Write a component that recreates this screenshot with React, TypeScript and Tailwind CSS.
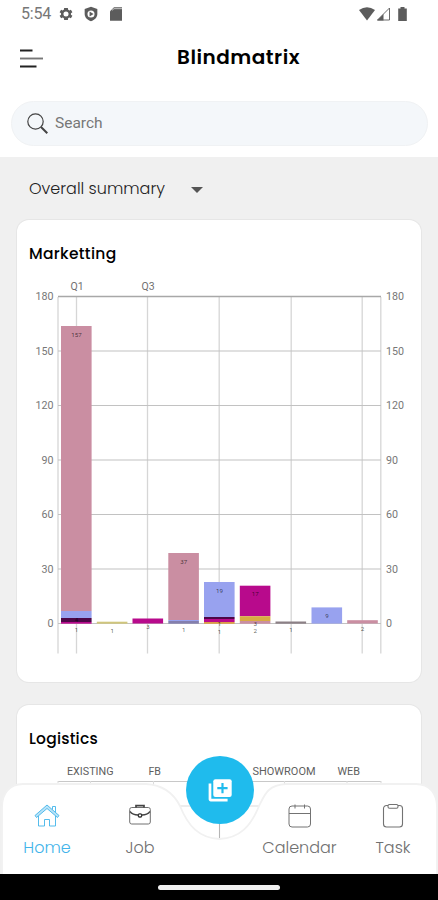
import React from "react";

type Segment = { y: number; h: number; fill: string };
type Label = { y: number; text: string };
type Bar = { x: number; segments: Segment[]; labels: Label[] };

const PINK = "#ca8ea2";
const BLUE = "#98a2ef";
const MAGENTA = "#b80a8c";
const DARK = "#4d0747";

const bars: Bar[] = [
  {
    x: 61,
    segments: [
      { y: 326, h: 285, fill: PINK },
      { y: 611, h: 7, fill: BLUE },
      { y: 618, h: 4, fill: DARK },
      { y: 622, h: 1.7, fill: MAGENTA },
    ],
    labels: [{ y: 337, text: "157" }, { y: 622, text: "4" }, { y: 632, text: "1" }],
  },
  { x: 96.8, segments: [{ y: 621.7, h: 2, fill: "#d0c67c" }], labels: [{ y: 633, text: "1" }] },
  { x: 132.5, segments: [{ y: 618.5, h: 5, fill: MAGENTA }], labels: [{ y: 629, text: "3" }] },
  {
    x: 168.3,
    segments: [
      { y: 553, h: 67, fill: PINK },
      { y: 620, h: 1, fill: BLUE },
      { y: 621, h: 2.7, fill: "#847fae" },
    ],
    labels: [{ y: 563.5, text: "37" }, { y: 632, text: "1" }],
  },
  {
    x: 204,
    segments: [
      { y: 582, h: 35, fill: BLUE },
      { y: 617, h: 2, fill: DARK },
      { y: 619, h: 3, fill: MAGENTA },
      { y: 622, h: 1.8, fill: "#dc9e45" },
    ],
    labels: [{ y: 593, text: "19" }, { y: 626, text: "1" }, { y: 633.5, text: "1" }],
  },
  {
    x: 239.8,
    segments: [
      { y: 585.7, h: 30.5, fill: MAGENTA },
      { y: 616.2, h: 4.8, fill: "#d8aa43" },
      { y: 621, h: 2.7, fill: PINK },
    ],
    labels: [{ y: 596, text: "17" }, { y: 625.5, text: "3" }, { y: 633, text: "2" }],
  },
  { x: 275.5, segments: [{ y: 621.5, h: 2.2, fill: "#8c8086" }], labels: [{ y: 632, text: "1" }] },
  { x: 311.5, segments: [{ y: 607.4, h: 16.2, fill: BLUE }], labels: [{ y: 618, text: "9" }] },
  { x: 347.2, segments: [{ y: 620.2, h: 3.3, fill: PINK }], labels: [{ y: 631, text: "2" }] },
];

const ticks = [180, 150, 120, 90, 60, 30, 0];
const tickY = (v: number) => 623.5 - (v / 180) * 327;

function MarketingChart() {
  return (
    <svg
      viewBox="17 274 404 392"
      className="block h-[392px] w-[404px] font-['Roboto','Liberation_Sans',sans-serif]"
    >
      {[58, 76.5, 147.5, 219.2, 291.2, 362.2, 380.8].map((x) => (
        <line key={x} x1={x} x2={x} y1={297} y2={653.5} stroke="#d6d6d6" strokeWidth={1.3} />
      ))}
      {ticks.map((v) => (
        <g key={v}>
          <line
            x1={58}
            x2={381}
            y1={tickY(v)}
            y2={tickY(v)}
            stroke={v === 180 ? "#a8a8a8" : "#c2c2c2"}
            strokeWidth={v === 180 ? 1.4 : 1.1}
          />
          <text x={53.5} y={tickY(v) + 3.6} textAnchor="end" fontSize={10.7} fill="#777">
            {v}
          </text>
          <text x={386} y={tickY(v) + 3.6} fontSize={10.7} fill="#777">
            {v}
          </text>
        </g>
      ))}
      <text x={77} y={289.5} textAnchor="middle" fontSize={10.5} fill="#707070">Q1</text>
      <text x={148} y={289.5} textAnchor="middle" fontSize={10.5} fill="#707070">Q3</text>
      {bars.map((b) => (
        <g key={b.x}>
          {b.segments.map((s) => (
            <rect key={s.y} x={b.x} y={s.y} width={30.6} height={s.h} fill={s.fill} />
          ))}
          {b.labels.map((l) => (
            <text
              key={l.y}
              x={b.x + 15.4}
              y={l.y}
              textAnchor="middle"
              fontSize={6.2}
              fill="#000"
              fillOpacity={0.65}
            >
              {l.text}
            </text>
          ))}
        </g>
      ))}
    </svg>
  );
}

function LogisticsChart() {
  return (
    <svg
      viewBox="17 760 404 100"
      className="block h-[100px] w-[404px] font-['Roboto','Liberation_Sans',sans-serif]"
    >
      <g stroke="#dcdcdc" strokeWidth={1.1}>
        <path d="M58 781.5H381" stroke="#c8c8c8" />
        <path d="M58 806H381M58 781V860M90.5 781V860M153.5 781V860M284.5 781V860M347 781V860M381 781V860" />
        <path d="M219.5 781V860" stroke="#b5b5b5" />
      </g>
      <g fontSize={10.5} fill="#606060">
        <text x={67} y={775} textLength={46.5} lengthAdjust="spacingAndGlyphs">EXISTING</text>
        <text x={148.5} y={775} textLength={12.5} lengthAdjust="spacingAndGlyphs">FB</text>
        <text x={252.5} y={775} textLength={63} lengthAdjust="spacingAndGlyphs">SHOWROOM</text>
        <text x={337.5} y={775} textLength={22.5} lengthAdjust="spacingAndGlyphs">WEB</text>
      </g>
    </svg>
  );
}

function StatusBar() {
  return (
    <div className="flex h-7 items-center justify-between pl-[21px] pr-[30px] text-[#5c5c5c]">
      <div className="flex items-center">
        <span className="w-[37px] font-['Roboto','Liberation_Sans',sans-serif] text-[16px] leading-7 tracking-[-0.2px] text-[#777]">
          5:54
        </span>
        <svg viewBox="0 0 24 24" className="h-4 w-4" fill="currentColor">
          <path d="M19.4 13c.1-.6.1-1.4 0-2l2.2-1.6-2.2-3.8-2.5 1a8 8 0 0 0-1.7-1L14.8 3H9.2l-.4 2.6a8 8 0 0 0-1.7 1l-2.5-1-2.2 3.8L4.6 11c-.1.7-.1 1.3 0 2l-2.2 1.6 2.2 3.8 2.5-1c.5.4 1.1.7 1.7 1l.4 2.6h5.6l.4-2.6c.6-.3 1.2-.6 1.7-1l2.5 1 2.2-3.8zM12 15.8a3.8 3.8 0 1 1 0-7.6 3.8 3.8 0 0 1 0 7.6z" />
        </svg>
        <svg viewBox="0 0 24 24" className="ml-[9px] h-4 w-4" fill="currentColor">
          <path fillRule="evenodd" d="M12 1 2.5 4.5V12c0 5 4 9 9.5 11 5.500-2 9.500-6 9.500-11V4.500zM12 6.700a5.300 5.300 0 1 1 0 10.600 5.300 5.300 0 0 1 0-10.600z" />
          <path d="M9.800 8.300v7.400l6-3.700z" />
        </svg>
        <svg viewBox="0 0 24 24" className="ml-[9px] h-4 w-4" fill="currentColor">
          <path d="M9 2h12v20H3V8z" />
          <path d="M6 6.500 9 4h12" stroke="#c4c4c4" strokeWidth="1.500" fill="none" />
        </svg>
      </div>
      <svg viewBox="0 0 50 16" className="h-4 w-[50px]" fill="currentColor">
        <path d="M1 4Q9 -1.500 17 4L9 14.500z" />
        <path d="M19.500 14 31.500 2V14z" fill="none" stroke="currentColor" strokeWidth="0.900" />
        <path d="M19 14.400 25.500 8V14.400z" />
        <path d="M42.500 2.500V1h4v1.500h2.300v12.500h-8.600V2.500z" />
      </svg>
    </div>
  );
}

const poppins = "font-['Poppins','Inter','Liberation_Sans',sans-serif]";

function NavItem({
  label,
  icon,
  active,
  width,
}: {
  label: string;
  icon: React.ReactNode;
  active?: boolean;
  width: string;
}) {
  return (
    <div className={`flex flex-col items-center ${width} ${active ? "text-[#42b4ea]" : "text-[#707070]"}`}>
      <div className="h-8">{icon}</div>
      <span className="mt-[3px] text-[16px] font-light leading-6">{label}</span>
    </div>
  );
}

function BottomNav() {
  return (
    <div className="absolute inset-x-0 bottom-0">
      <div className="relative h-[118px]">
        <svg viewBox="0 756 438 118" className="absolute inset-0 h-[118px] w-[438px]">
          <path
            d="M2 875V807C2 794 9 784 23 784H146C164 785 174 794 180 806C188 826 199 838 219.500 839C240 838 251 826 259 806C265 794 268 785 286 784H416C430 784 437 794 437 807V875Z"
            fill="#fff"
            stroke="#f1f1f1"
            strokeWidth="1.800"
          />
        </svg>
        <div className="relative flex pt-[45px]">
          <NavItem
            active
            label="Home"
            width="w-[94px]"
            icon={
              <svg viewBox="0 0 28 28" className="h-7 w-7" fill="none" stroke="currentColor" strokeWidth="0.900">
                <path d="M2 14.500 14 4 26 14.500 24.500 16.500 14 7.500 3.500 16.500z" fill="#b9e3f8" />
                <path d="M5.500 15V25h6v-6.500h5V25h6V15M19.500 8.500V5.500h3v5.500" />
              </svg>
            }
          />
          <NavItem
            label="Job"
            width="w-[92px]"
            icon={
              <svg viewBox="0 0 28 28" className="h-7 w-7" fill="none" stroke="#707070" strokeWidth="1">
                <rect x="3.700" y="6.500" width="20.600" height="16.500" rx="2" />
                <path d="M10 6.500V4.700h8v1.800" stroke="#444" strokeWidth="1.700" />
                <path d="M4 10.500C6 13 9 14 12 14M16 14c3 0 6-1 8-3.500" stroke="#444" strokeWidth="1.300" />
                <rect x="12.300" y="12.800" width="3.400" height="3.200" rx="1.200" stroke="#333" strokeWidth="1.300" />
              </svg>
            }
          />
          <div className="w-[63px]" />
          <NavItem
            label="Calendar"
            width="w-[101px]"
            icon={
              <svg viewBox="0 0 28 28" className="h-7 w-7" fill="none" stroke="#737373" strokeWidth="1">
                <rect x="3" y="5" width="21.500" height="21" rx="3" />
                <path d="M3 12.500H24.500M9 3.500v4M18.500 3.500v4" />
              </svg>
            }
          />
          <NavItem
            label="Task"
            width="w-[86px]"
            icon={
              <svg viewBox="0 0 28 28" className="h-7 w-7" fill="none" stroke="#737373" strokeWidth="1.100">
                <path d="M9 4.500H7.500a3 3 0 0 0-3 3V23a3 3 0 0 0 3 3h13a3 3 0 0 0 3-3V7.500a3 3 0 0 0-3-3H19" />
                <rect x="9" y="3.500" width="10" height="3.700" rx="1.500" />
              </svg>
            }
          />
        </div>
        <div className="absolute left-[186px] top-0 flex h-[68px] w-[68px] items-center justify-center rounded-full bg-[#1fbbed]">
          <svg viewBox="0 0 24 24" className="h-[26px] w-[26px]" fill="#fff">
            <path d="M3.500 6h-2v14.500c0 1.100.9 2 2 2H19v-2.500H4V6z" />
            <rect x="5.800" y="2" width="17" height="16.500" rx="2" />
            <path d="M14.300 5.500v9.500M9.500 10.300h9.500" stroke="#1fbbed" strokeWidth="2" />
          </svg>
        </div>
      </div>
      <div className="flex h-[26px] items-center justify-center bg-black">
        <div className="h-[5px] w-[122px] rounded-full bg-[#efefef]" />
      </div>
    </div>
  );
}

export default function App() {
  return (
    <div className={`relative flex h-[900px] w-[438px] flex-col overflow-hidden bg-white ${poppins}`}>
      <StatusBar />
      <header className="flex h-[73px] items-start justify-between pl-5 pr-[138px] pt-[15px]">
        <svg viewBox="0 0 24 22" className="mt-[4px] h-[22px] w-6" fill="none" strokeWidth="1.900">
          <path d="M0 3.500h12.500M0 19.500h16.500" stroke="#222" />
          <path d="M0 11.500h23" stroke="#777" />
        </svg>
        <h1 className="text-[20px] font-semibold leading-7 tracking-[0.500px] text-black">Blindmatrix</h1>
      </header>
      <div className="ml-[11px] flex h-[45px] w-[417px] items-center rounded-full border border-[#f0f2f4] bg-[#f4f7fa] pl-[14px]">
        <svg viewBox="0 0 24 24" className="h-6 w-6" fill="none" stroke="#444">
          <circle cx="9.500" cy="9.500" r="7.700" strokeWidth="1.200" />
          <path d="m15 15 6.300 6.300" strokeWidth="2" />
        </svg>
        <span className="ml-[5px] mt-px font-['Roboto','Liberation_Sans',sans-serif] text-[15.500px] text-[#777]">
          Search
        </span>
      </div>
      <main className="mt-[11px] flex flex-1 flex-col overflow-hidden bg-[#f0f0f0] pl-[17px]">
        <div className="flex h-[63px] shrink-0 items-center pl-3 pr-8">
          <span className="w-[161px] text-[16px] font-light text-[#222]">Overall summary</span>
          <svg viewBox="0 0 12 6" className="ml-px mt-[3px] h-[6px] w-3">
            <path d="M0 0h12L6 6z" fill="#555" />
          </svg>
        </div>
        <section className="h-[462px] w-[404px] shrink-0 rounded-xl bg-white shadow-[0_0_0_1px_#e6e6e6]">
          <h2 className="h-[54px] pl-3 pt-[22px] text-[15.500px] font-medium leading-6 tracking-[0.300px] text-black">Marketting</h2>
          <MarketingChart />
        </section>
        <section className="mt-[23px] h-[250px] w-[404px] shrink-0 rounded-xl bg-white shadow-[0_0_0_1px_#e6e6e6]">
          <h2 className="h-[55px] pl-3 pt-[22px] text-[15.500px] font-medium leading-6 tracking-[0.200px] text-black">Logistics</h2>
          <LogisticsChart />
        </section>
      </main>
      <BottomNav />
    </div>
  );
}
